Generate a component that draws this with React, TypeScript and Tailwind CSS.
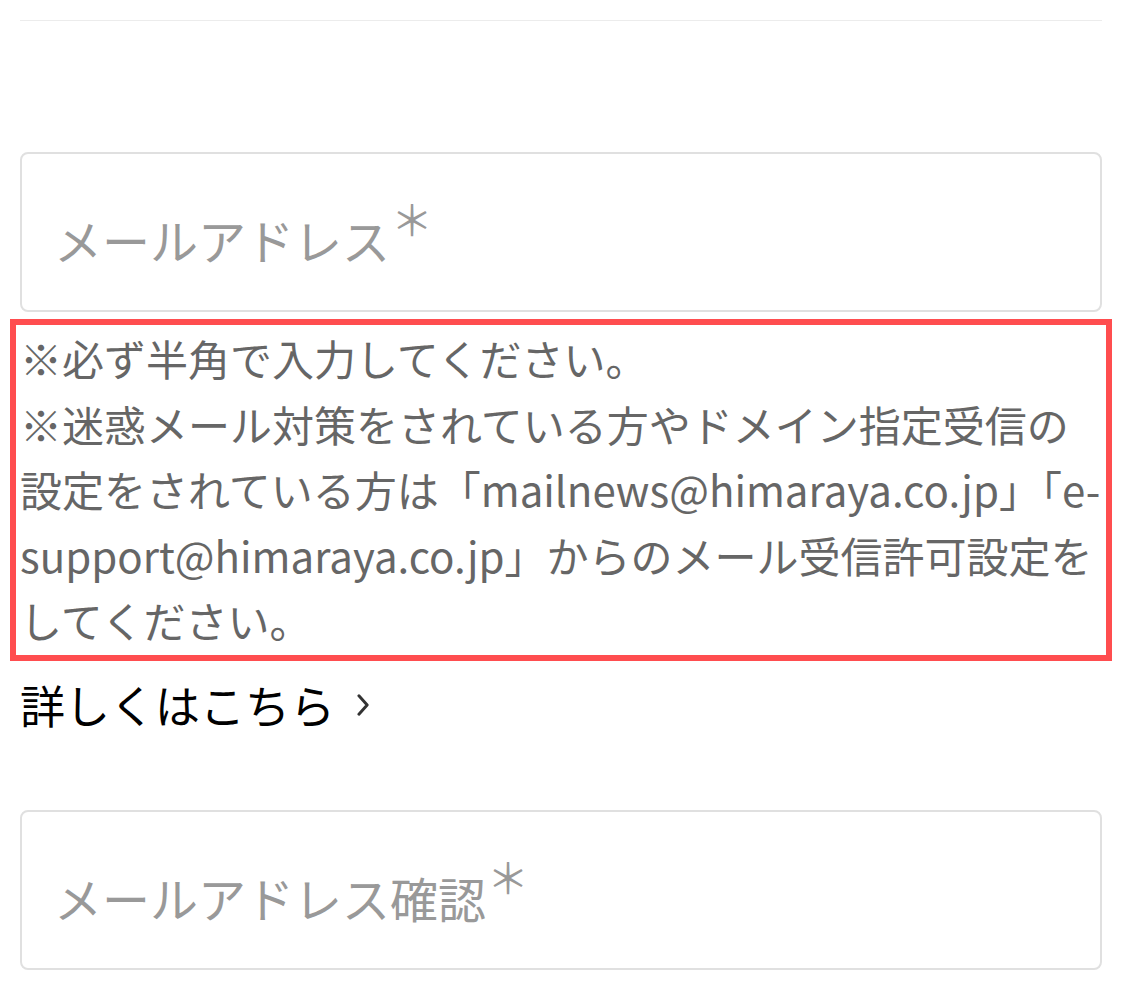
const FONT = "font-['Noto_Sans_CJK_JP','Noto_Sans',sans-serif]"

function FloatingField({ label }: { label: string }) {
  return (
    <div className="flex h-[160px] items-center rounded-[8px] border-2 border-[#e0e0e0] bg-white pl-[32px] pt-[14px]">
      <span className="text-[48px] leading-none text-[#999999]">
        {label}
        <span className="relative -top-[24px] ml-[1px] inline-block text-[42px] leading-none">＊</span>
      </span>
    </div>
  )
}

export default function App() {
  return (
    <div className={`${FONT} min-h-[992px] w-[1122px] bg-white px-5 pt-5`}>
      <div className="h-px bg-[#ececec]" />

      <div className="mt-[131px]">
        <FloatingField label="メールアドレス" />
      </div>

      {/* annotated notice block */}
      <div className="-mx-[10px] mt-[7px] border-[6px] border-[#ff4d4f] px-[4px] pb-[2px]">
        <p className="text-[42px] leading-[65.5px] text-[#666666]">
          ※必ず半角で入力してください。
          <br />
          ※迷惑メール対策をされている方やドメイン指定受信の設定をされている方は「mailnews@himaraya.co.jp」「e-support@himaraya.co.jp」からのメール受信許可設定をしてください。
        </p>
      </div>

      <a href="#" className="mt-[12px] flex items-center text-[45px] leading-[64px] text-black">
        詳しくはこちら
        <svg viewBox="0 0 14 24" className="ml-[22px] h-[22px] w-[13px]" aria-hidden>
          <path d="M2 2 L11 12 L2 22" fill="none" stroke="#333" strokeWidth="3.2" strokeLinecap="round" strokeLinejoin="round" />
        </svg>
      </a>

      <div className="mt-[73px]">
        <FloatingField label="メールアドレス確認" />
      </div>
    </div>
  )
}
